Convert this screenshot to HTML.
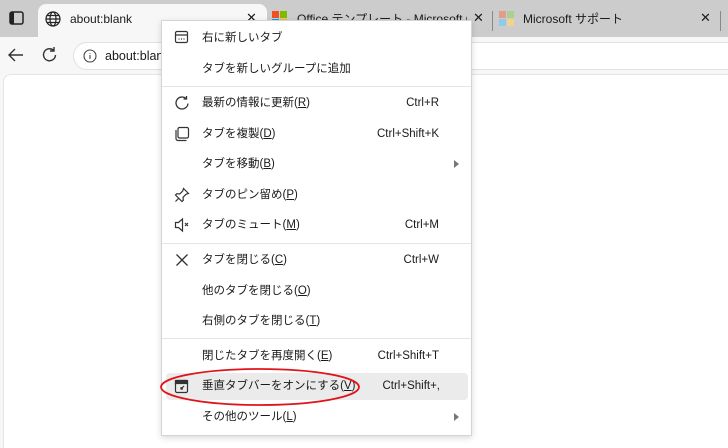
<!DOCTYPE html>
<html><head><meta charset="utf-8"><style>
*{margin:0;padding:0;box-sizing:border-box}
body{width:728px;height:448px;overflow:hidden;background:#f7f7f7;font-family:"Liberation Sans","Noto Sans CJK JP",sans-serif;position:relative;color:#1a1a1a}
.tabbar{position:absolute;left:0;top:0;width:728px;height:37px;background:#cccccc}
.tab{position:absolute;top:4px;height:33px;background:#f7f7f7;border-radius:8px 8px 0 0;left:38px;width:229px}
.t{position:absolute;font-size:12px;white-space:nowrap;line-height:16px}
.content{position:absolute;left:3px;top:74px;width:725px;height:374px;background:#fff;border-radius:8px 0 0 0;border-top:1px solid #e5e5e5;border-left:1px solid #e5e5e5}
.addr{position:absolute;left:73px;top:42px;width:700px;height:28px;border-radius:14px;background:#fff;border:1px solid #e0e0e0}
.menu{position:absolute;left:161px;top:20px;width:311px;height:416px;background:#fff;border:1px solid #d4d4d4;box-shadow:0 2px 6px rgba(0,0,0,.15)}
.it{position:absolute;left:0;width:309px;height:28px;font-size:11.5px;line-height:28px}
.it .l{position:absolute;left:40px;top:0;white-space:nowrap}
.it .r{position:absolute;right:32px;top:0;font-size:11.5px;white-space:nowrap}
.it .a{position:absolute;right:12px;top:10px;width:0;height:0;border-left:5px solid #777;border-top:4px solid transparent;border-bottom:4px solid transparent}
.it svg{position:absolute;left:12px;top:6px}
.sep{position:absolute;left:0;width:309px;height:1px;background:#e5e5e5}
u{text-decoration:underline}
</style></head><body>
<div class="tabbar">
 <svg style="position:absolute;left:9px;top:11px" width="15" height="14"><rect x="1" y="1" width="13" height="12" rx="2" fill="none" stroke="#222" stroke-width="1.5"/><rect x="1" y="1" width="4" height="12" fill="#222"/></svg>
 <div class="tab"></div>
 <svg style="position:absolute;left:45px;top:11px" width="16" height="16" fill="none" stroke="#222" stroke-width="1.2"><circle cx="8" cy="8" r="7"/><ellipse cx="8" cy="8" rx="3" ry="7"/><path d="M1 8h14M2 4.5h12M2 11.5h12"/></svg>
 <div class="t" style="left:70px;top:11px">about:blank</div>
 <div class="t" style="left:246px;top:10px;font-size:13px">✕</div>
 <svg style="position:absolute;left:272px;top:11px" width="16" height="16"><rect x="0" y="0" width="7" height="7" fill="#f25022"/><rect x="8" y="0" width="7" height="7" fill="#7fba00"/><rect x="0" y="8" width="7" height="7" fill="#00a4ef"/><rect x="8" y="8" width="7" height="7" fill="#ffb900"/></svg>
 <div class="t" style="left:297px;top:11px;width:170px;overflow:hidden">Office テンプレート - Microsoft Office</div>
 <div class="t" style="left:473px;top:10px;font-size:13px">✕</div>
 <div style="position:absolute;left:492px;top:11px;width:1px;height:20px;background:#888"></div>
 <svg style="position:absolute;left:499px;top:11px" width="16" height="16"><rect x="0" y="0" width="7" height="7" fill="#e49b8a"/><rect x="8" y="0" width="7" height="7" fill="#a9d08e"/><rect x="0" y="8" width="7" height="7" fill="#8fcbe9"/><rect x="8" y="8" width="7" height="7" fill="#f3d38c"/></svg>
 <div class="t" style="left:523px;top:11px">Microsoft サポート</div>
 <div class="t" style="left:700px;top:10px;font-size:13px">✕</div>
 <div style="position:absolute;left:720px;top:11px;width:1px;height:20px;background:#888"></div>
</div>
<svg style="position:absolute;left:7px;top:47px" width="18" height="16" fill="none" stroke="#333" stroke-width="1.4"><path d="M16 8H2M8 2L2 8l6 6"/></svg>
<svg style="position:absolute;left:41px;top:46px" width="18" height="18" fill="none" stroke="#333" stroke-width="1.4"><path d="M14.5 9A6 6 0 1 1 12.5 4.3M13 1v4h-4"/></svg>
<div class="addr"></div>
<svg style="position:absolute;left:83px;top:49px" width="14" height="14" fill="none" stroke="#444" stroke-width="1.1"><circle cx="7" cy="7" r="6"/><path d="M7 6v4M7 4v.8"/></svg>
<div class="t" style="left:105px;top:48px;font-size:12.5px">about:blank</div>
<div class="content"></div>
<div class="menu">
 <div class="it" style="top:3px"><svg width="15" height="15" fill="none" stroke="#333" stroke-width="1.2"><rect x="1.5" y="1.5" width="12" height="11" rx="1.5"/><path d="M1.5 5h12M4.5 9h1M7 9h1M9.5 9h1"/></svg><span class="l">右に新しいタブ</span></div>
 <div class="it" style="top:34px"><span class="l">タブを新しいグループに追加</span></div>
 <div class="sep" style="top:65px"></div>
 <div class="it" style="top:68px"><svg width="16" height="16" fill="none" stroke="#333" stroke-width="1.3"><path d="M14 8.5A6 6 0 1 1 12 3.5M12.5 1v3h-3"/></svg><span class="l">最新の情報に更新(<u>R</u>)</span><span class="r">Ctrl+R</span></div>
 <div class="it" style="top:99px"><svg width="16" height="16" fill="none" stroke="#333" stroke-width="1.2"><rect x="4" y="1.5" width="10.5" height="10.5" rx="1.5"/><path d="M2 4v8.5A2 2 0 0 0 4 14.5h8.5"/></svg><span class="l">タブを複製(<u>D</u>)</span><span class="r">Ctrl+Shift+K</span></div>
 <div class="it" style="top:129px"><span class="l">タブを移動(<u>B</u>)</span><span class="a"></span></div>
 <div class="it" style="top:160px"><svg width="16" height="16" fill="none" stroke="#333" stroke-width="1.2"><path d="M9.5 1.5l5 5-2.5.8-3 3 .3 3L8 14.5 1.5 8 2.7 6.7l3 .3 3-3z M5 11l-3.5 3.5"/></svg><span class="l">タブのピン留め(<u>P</u>)</span></div>
 <div class="it" style="top:190px"><svg width="18" height="16" fill="none" stroke="#333" stroke-width="1.2"><path d="M1.5 5.5h3l4-3.5v12l-4-3.5h-3z M11 6l3 3M14 6l-3 3"/></svg><span class="l">タブのミュート(<u>M</u>)</span><span class="r">Ctrl+M</span></div>
 <div class="sep" style="top:222px"></div>
 <div class="it" style="top:225px"><svg width="16" height="16" fill="none" stroke="#333" stroke-width="1.3"><path d="M2.5 2.5l11 11M13.5 2.5l-11 11"/></svg><span class="l">タブを閉じる(<u>C</u>)</span><span class="r">Ctrl+W</span></div>
 <div class="it" style="top:256px"><span class="l">他のタブを閉じる(<u>O</u>)</span></div>
 <div class="it" style="top:286px"><span class="l">右側のタブを閉じる(<u>T</u>)</span></div>
 <div class="sep" style="top:317px"></div>
 <div class="it" style="top:321px"><span class="l">閉じたタブを再度開く(<u>E</u>)</span><span class="r">Ctrl+Shift+T</span></div>
 <div class="it" style="top:352px;left:4px;width:302px;background:#ebebeb;border-radius:4px;height:27px;line-height:27px"><svg width="15" height="15" style="left:8px" fill="none" stroke="#333" stroke-width="1.2"><rect x="1.5" y="1.5" width="12" height="12" rx="1.5"/><rect x="1.5" y="1.5" width="12" height="3" fill="#333"/><path d="M10 7l-3 3M7 8v2h2"/></svg><span class="l" style="left:36px">垂直タブバーをオンにする(<u>V</u>)</span><span class="r" style="right:28px">Ctrl+Shift+,</span></div>
 <div class="it" style="top:382px"><span class="l">その他のツール(<u>L</u>)</span><span class="a"></span></div>
</div>
<svg style="position:absolute;left:158px;top:366px" width="204" height="42"><ellipse cx="102" cy="21" rx="99" ry="18" fill="none" stroke="#e0141c" stroke-width="1.8"/></svg>
</body></html>
